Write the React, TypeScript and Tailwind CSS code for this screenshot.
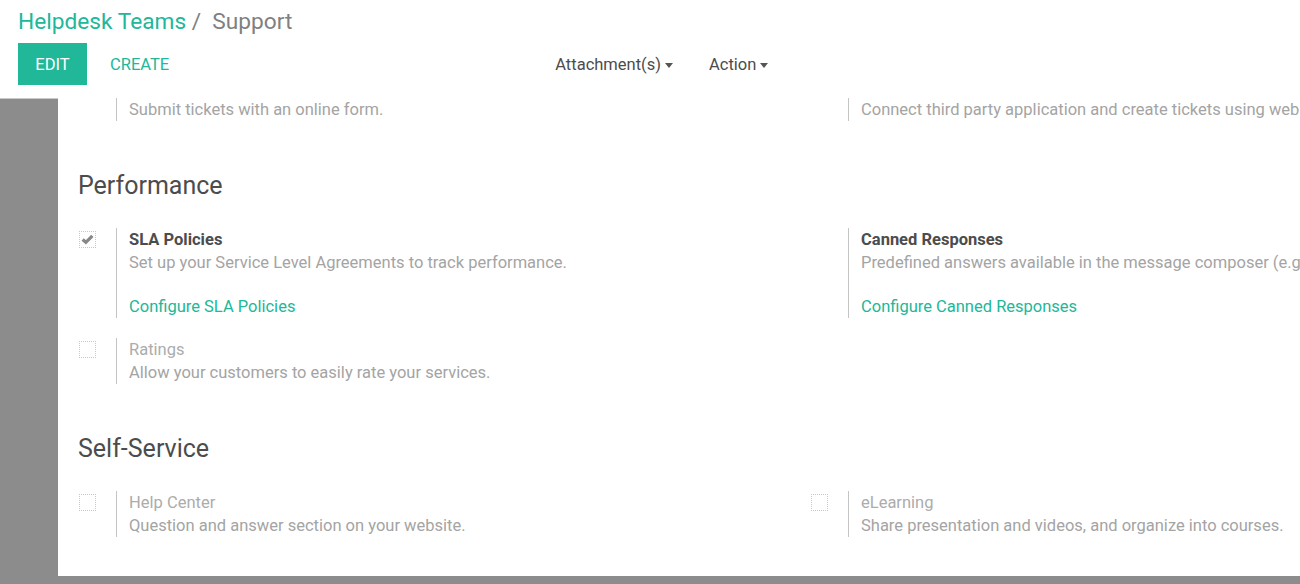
import { ReactNode } from 'react';

function Caret() {
  return <span className="ml-1 inline-block h-0 w-0 border-x-[4.5px] border-t-[5px] border-x-transparent border-t-[#555] align-middle" />;
}

function Checkbox({ checked }: { checked?: boolean }) {
  return (
    <div className="flex h-[17px] w-[17px] items-center justify-center border border-dotted border-[#c8c8c8] bg-white">
      {checked && (
        <svg viewBox="0 0 16 16" className="h-[13px] w-[13px]">
          <path d="M2 8 L6 11.5 L14 3.5" fill="none" stroke="#888" strokeWidth="4" strokeLinejoin="miter" />
        </svg>
      )}
    </div>
  );
}

type SettingProps = {
  checkbox?: 'none' | 'on' | 'off';
  title?: string;
  bold?: boolean;
  desc: string;
  link?: string;
};

function Setting({ checkbox = 'off', title, bold, desc, link }: SettingProps) {
  return (
    <div className="flex">
      <div className="w-[38px] shrink-0 pl-[1px] pt-[3px]">{checkbox !== 'none' && <Checkbox checked={checkbox === 'on'} />}</div>
      <div className="whitespace-nowrap border-l border-[#c4c4c4] pl-3">
        {title && <div className={bold ? 'font-bold text-[#4c4c4c]' : 'text-[#acacac]'}>{title}</div>}
        <div className="text-[#a4a4a4]">{desc}</div>
        {link && <div className="mt-[21px] text-[#21b799]">{link}</div>}
      </div>
    </div>
  );
}

function Row({ children }: { children: ReactNode }) {
  return <div className="grid grid-cols-[732px_732px]">{children}</div>;
}

function Heading({ children }: { children: ReactNode }) {
  return <h2 className="text-[25px] leading-[32px] text-[#4c4c4c]">{children}</h2>;
}

export default function App() {
  return (
    <div className="h-[584px] w-full overflow-hidden bg-[#8c8c8c] font-['Roboto',sans-serif] text-[16.5px] leading-[23px]">
      <header className="h-[99px] border-b border-[#c9c9c9] bg-white pl-[18px]">
        <div className="pt-[6px] text-[22.7px] leading-[32px]">
          <span className="text-[#21b799]">Helpdesk Teams</span>
          <span className="text-[#808080]"> /&nbsp; Support</span>
        </div>
        <div className="mt-[5px] flex items-center">
          <button className="h-[42px] w-[69px] bg-[#21b799] text-white">EDIT</button>
          <button className="ml-[23px] text-[#21b799]">CREATE</button>
          <button className="ml-[386px] text-[#4c4c4c]">
            Attachment(s)
            <Caret />
          </button>
          <button className="ml-[36px] text-[#4c4c4c]">
            Action
            <Caret />
          </button>
        </div>
      </header>

      <main className="ml-[58px] h-[478px] bg-white pl-[20px]">
        <div className="-mt-[1px]">
          <Row>
            <Setting checkbox="none" desc="Submit tickets with an online form." />
            <Setting checkbox="none" desc="Connect third party application and create tickets using web services." />
          </Row>
        </div>

        <div className="mt-[49px]">
          <Heading>Performance</Heading>
        </div>
        <div className="mt-[26px] flex flex-col gap-[20px]">
          <Row>
            <Setting
              checkbox="on"
              bold
              title="SLA Policies"
              desc="Set up your Service Level Agreements to track performance."
              link="Configure SLA Policies"
            />
            <Setting
              checkbox="none"
              bold
              title="Canned Responses"
              desc="Predefined answers available in the message composer (e.g. :canned)."
              link="Configure Canned Responses"
            />
          </Row>
          <Row>
            <Setting title="Ratings" desc="Allow your customers to easily rate your services." />
            <div />
          </Row>
        </div>

        <div className="mt-[49px]">
          <Heading>Self-Service</Heading>
        </div>
        <div className="mt-[26px]">
          <Row>
            <Setting title="Help Center" desc="Question and answer section on your website." />
            <Setting title="eLearning" desc="Share presentation and videos, and organize into courses." />
          </Row>
        </div>
      </main>
    </div>
  );
}
